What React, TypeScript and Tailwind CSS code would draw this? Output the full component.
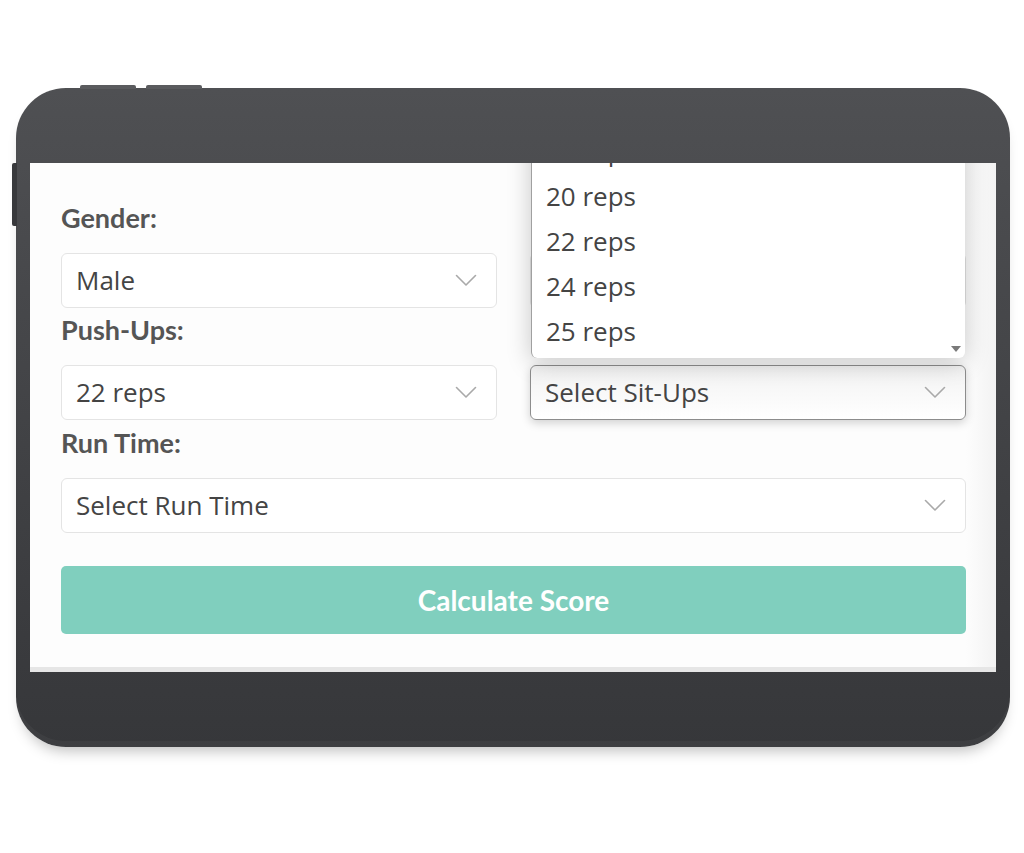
import React from "react";

const Chevron = () => (
  <svg width="22" height="13" viewBox="0 0 22 13" fill="none" className="shrink-0">
    <polyline points="1.5,1.5 11,11 20.5,1.5" stroke="#a9a9a9" strokeWidth="1.6" strokeLinecap="round" strokeLinejoin="round" />
  </svg>
);

function Field({ label, value }: { label: string; value: string }) {
  return (
    <div className="flex flex-col">
      <label className="h-[36px] leading-[36px] mb-[17px] font-['Lato',sans-serif] font-bold text-[27px] text-[#555]">{label}</label>
      <div className="h-[55px] flex items-center justify-between pl-[14px] pr-[19px] rounded-[6px] font-['Open_Sans',sans-serif] text-[26px] text-[#444] border border-[#e4e4e4] bg-white">
        <span>{value}</span>
        <Chevron />
      </div>
    </div>
  );
}

const OPTIONS = ["18 reps", "20 reps", "22 reps", "24 reps", "25 reps"];

export default function App() {
  return (
    <div className="min-h-[853px] w-[1024px] bg-white pt-[88px] pl-[16px]">
      <div className="relative w-[994px]">
        {/* top buttons */}
        <div className="absolute -top-[3px] left-[64px] w-[56px] h-[4px] rounded-t-[2px] bg-[#5a5b5e]" />
        <div className="absolute -top-[3px] left-[130px] w-[56px] h-[4px] rounded-t-[2px] bg-[#5a5b5e]" />
        {/* side button */}
        <div className="absolute top-[75px] -left-[4px] w-[5px] h-[63px] rounded-l-[2px] bg-[#38393c]" />

        <div className="rounded-[50px] bg-gradient-to-b from-[#4f5053] via-[#424346] to-[#36373a] px-[14px] pt-[75px] pb-[75px] shadow-[0_10px_14px_-6px_rgba(0,0,0,0.25),inset_0_-6px_0_rgba(255,255,255,0.04)]">
          <div className="relative h-[509px] overflow-hidden bg-[#fdfdfd] border-b-[5px] border-[#e6e6e6]">
            <div className="absolute top-0 right-0 w-[30px] h-full bg-gradient-to-r from-transparent to-[#ececec] opacity-60" />
            <div className="relative pl-[31px] pr-[30px] pt-[37px]">
              <div className="grid grid-cols-2 gap-x-[33px]">
                <div className="flex flex-col">
                  <Field label="Gender:" value="Male" />
                  <div className="h-[4px]" />
                  <Field label="Push-Ups:" value="22 reps" />
                </div>
                <div className="flex flex-col">
                  {/* field hidden beneath the open list */}
                  <div className="h-[53px]" />
                  <div className="h-[55px] rounded-[6px] border border-[#e4e4e4] bg-white" />
                  <div className="h-[4px]" />
                  <div className="relative">
                    <div className="h-[53px]" />
                    <div className="h-[55px] flex items-center justify-between pl-[14px] pr-[19px] rounded-[6px] font-['Open_Sans',sans-serif] text-[26px] text-[#444] border border-[#8c8c8c] bg-gradient-to-b from-[#f2f2f2] to-white shadow-[0_3px_10px_rgba(0,0,0,0.18)]">
                      <span>Select Sit-Ups</span>
                      <Chevron />
                    </div>
                    {/* open dropdown list */}
                    <div className="absolute bottom-[62px] left-[1px] right-[1px] bg-white border-l border-[#a0a0a0] rounded-b-[6px] pb-[4px] shadow-[0_4px_24px_rgba(0,0,0,0.22)] font-['Open_Sans',sans-serif] text-[26px] text-[#444]">
                      {OPTIONS.map((o) => (
                        <div key={o} className="h-[45px] leading-[45px] pl-[14px]">
                          {o}
                        </div>
                      ))}
                      <div className="absolute right-[4px] bottom-[6px] w-0 h-0 border-l-[5px] border-r-[5px] border-t-[6px] border-l-transparent border-r-transparent border-t-[#7a7a7a]" />
                    </div>
                  </div>
                </div>
              </div>
              <div className="h-[5px]" />
              <Field label="Run Time:" value="Select Run Time" />
              <button className="mt-[33px] w-full h-[68px] rounded-[5px] bg-[#80cfbe] text-white font-['Lato',sans-serif] font-bold text-[28px]">
                Calculate Score
              </button>
            </div>
          </div>
        </div>
      </div>
    </div>
  );
}
